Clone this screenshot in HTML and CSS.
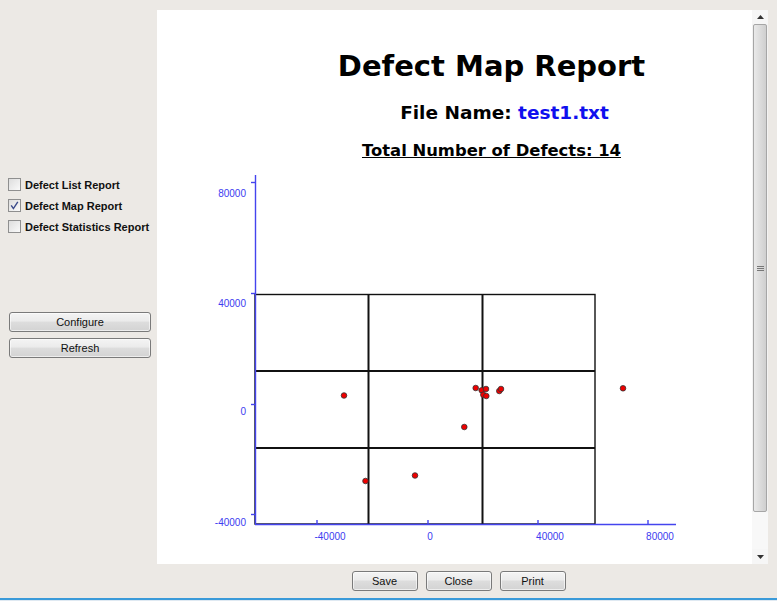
FILE: index.html
```html
<!DOCTYPE html>
<html>
<head>
<meta charset="utf-8">
<link rel="stylesheet" href="styles.css">
</head>
<body>
<div class="app">
  <aside class="side">
    <ul class="checks">
      <li class="check">
        <svg class="box" width="13" height="13" viewBox="0 0 13 13"><rect x="0.5" y="0.5" width="12" height="12" fill="url(#cbg)" stroke="#8f8f8f"/><defs><linearGradient id="cbg" x1="0" y1="0" x2="1" y2="1"><stop offset="0" stop-color="#dcdcdc"/><stop offset="1" stop-color="#fbfbfb"/></linearGradient></defs></svg>
        <span>Defect List Report</span>
      </li>
      <li class="check">
        <svg class="box" width="13" height="13" viewBox="0 0 13 13"><rect x="0.5" y="0.5" width="12" height="12" fill="url(#cbg)" stroke="#8f8f8f"/><path d="M3.2 6.4 L5.4 9.6 L9.8 2.8" fill="none" stroke="#3a4a8a" stroke-width="1.4"/></svg>
        <span>Defect Map Report</span>
      </li>
      <li class="check">
        <svg class="box" width="13" height="13" viewBox="0 0 13 13"><rect x="0.5" y="0.5" width="12" height="12" fill="url(#cbg)" stroke="#8f8f8f"/></svg>
        <span>Defect Statistics Report</span>
      </li>
    </ul>
    <div class="side-buttons">
      <button class="btn wide">Configure</button>
      <button class="btn wide">Refresh</button>
    </div>
  </aside>
  <div class="main">
    <div class="viewport">
      <div class="page">
        <div class="heading">
          <h1 class="title">Defect Map Report</h1>
          <p class="file">File Name: <span class="fname">test1.txt</span></p>
          <p class="total">Total Number of Defects: 14</p>
        </div>
        <svg class="chart" width="595" height="380" viewBox="157 170 595 380">
          <!-- grid -->
          <rect x="255" y="294.5" width="340" height="229.5" fill="none" stroke="#111" stroke-width="1.4"/>
          <line x1="368.5" y1="294" x2="368.5" y2="524" stroke="#111" stroke-width="2"/>
          <line x1="482.5" y1="294" x2="482.5" y2="524" stroke="#111" stroke-width="2"/>
          <line x1="255" y1="371" x2="595" y2="371" stroke="#111" stroke-width="2"/>
          <line x1="255" y1="448" x2="595" y2="448" stroke="#111" stroke-width="2"/>
          <!-- axes -->
          <g stroke="#4444ee" stroke-width="1.4">
            <line x1="255.5" y1="175" x2="255.5" y2="524"/>
            <line x1="255" y1="524.5" x2="676" y2="524.5"/>
            <line x1="251" y1="182.5" x2="255" y2="182.5"/>
            <line x1="251" y1="293.5" x2="255" y2="293.5"/>
            <line x1="251" y1="404.5" x2="255" y2="404.5"/>
            <line x1="251" y1="514.5" x2="255" y2="514.5"/>
            <line x1="317" y1="520" x2="317" y2="524"/>
            <line x1="428" y1="520" x2="428" y2="524"/>
            <line x1="538" y1="520" x2="538" y2="524"/>
            <line x1="648" y1="520" x2="648" y2="524"/>
          </g>
          <g class="axis-label" text-anchor="end">
            <text x="246" y="197">80000</text>
            <text x="246" y="307">40000</text>
            <text x="246" y="415">0</text>
            <text x="246" y="526">-40000</text>
          </g>
          <g class="axis-label" text-anchor="middle">
            <text x="330" y="540">-40000</text>
            <text x="430" y="540">0</text>
            <text x="550" y="540">40000</text>
            <text x="660" y="540">80000</text>
          </g>
          <!-- defects -->
          <g fill="#ee0000" stroke="#333" stroke-width="0.8">
            <circle cx="344" cy="395.5" r="2.8"/>
            <circle cx="365.5" cy="481" r="2.8"/>
            <circle cx="415" cy="475.5" r="2.8"/>
            <circle cx="464.3" cy="427" r="2.8"/>
            <circle cx="475.7" cy="388" r="2.8"/>
            <circle cx="481.7" cy="390.3" r="2.8"/>
            <circle cx="486" cy="389" r="2.8"/>
            <circle cx="483.3" cy="394.7" r="2.8"/>
            <circle cx="486.3" cy="396" r="2.8"/>
            <circle cx="499.3" cy="391" r="2.8"/>
            <circle cx="501" cy="389" r="2.8"/>
            <circle cx="623" cy="388.3" r="2.8"/>
          </g>
        </svg>
      </div>
      <div class="scrollbar">
        <div class="arrow up"><svg width="7" height="4" viewBox="0 0 7 4"><path d="M0 4 L3.5 0 L7 4 Z" fill="#333"/></svg></div>
        <div class="thumb">
          <svg width="7" height="5" viewBox="0 0 7 5"><path d="M0 0.5 H7 M0 2.5 H7 M0 4.5 H7" stroke="#777" stroke-width="1"/></svg>
        </div>
        <div class="track"></div>
        <div class="arrow down"><svg width="7" height="4" viewBox="0 0 7 4"><path d="M0 0 L3.5 4 L7 0 Z" fill="#333"/></svg></div>
      </div>
    </div>
    <div class="actions">
      <button class="btn">Save</button>
      <button class="btn">Close</button>
      <button class="btn">Print</button>
    </div>
  </div>
</div>
<div class="statusline"></div>
</body>
</html>
```
FILE: styles.css
```css
* { box-sizing: border-box; }
html, body { margin: 0; padding: 0; }
body {
  width: 777px;
  height: 601px;
  background: #ece9e5;
  font-family: "Liberation Sans", Arial, sans-serif;
  display: flex;
  flex-direction: column;
  overflow: hidden;
}
.app {
  display: grid;
  grid-template-columns: 157px 611px;
  padding-top: 10px;
}
.side {
  padding-top: 168px;
}
.checks {
  list-style: none;
  margin: 0;
  padding: 0 0 0 8px;
  display: flex;
  flex-direction: column;
  gap: 8px;
}
.check {
  display: flex;
  align-items: center;
  gap: 4px;
  height: 13px;
  font-weight: bold;
  font-size: 11px;
  color: #111;
}
.box { flex: none; }
.side-buttons {
  margin-top: 79px;
  padding-left: 9px;
  display: flex;
  flex-direction: column;
  gap: 6px;
}
.btn {
  font-family: "Liberation Sans", Arial, sans-serif;
  font-size: 11px;
  color: #111;
  height: 20px;
  width: 66px;
  padding: 0;
  border: 1px solid #7a7a7a;
  border-radius: 3px;
  background: linear-gradient(#f4f4f4 0%, #ebebeb 45%, #dddddd 50%, #d3d3d3 100%);
  box-shadow: inset 0 0 0 1px rgba(255,255,255,0.6);
}
.btn.wide { width: 142px; }
.viewport {
  display: flex;
  height: 554px;
}
.page {
  width: 595px;
  background: #fff;
  display: flex;
  flex-direction: column;
}
.heading {
  height: 160px;
  padding-left: 74px;
  text-align: center;
  font-family: "DejaVu Sans", Verdana, sans-serif;
  font-weight: bold;
  color: #000;
}
.title {
  margin: 38px 0 0;
  font-size: 29px;
  line-height: 36px;
}
.file {
  margin: 18px 0 0;
  padding-left: 26px;
  font-size: 18.5px;
  line-height: 22px;
}
.fname { color: #1010ee; }
.total {
  margin: 16px 0 0;
  font-size: 16.4px;
  line-height: 22px;
  text-decoration: underline;
}
.chart {
  display: block;
  flex: none;
}
.axis-label {
  font-family: "Liberation Sans", Arial, sans-serif;
  font-size: 10px;
  fill: #3c3cf0;
}
.scrollbar {
  width: 16px;
  display: flex;
  flex-direction: column;
  background: #f3f3f3;
}
.arrow {
  height: 14px;
  display: flex;
  align-items: center;
  justify-content: center;
  background: #f6f6f6;
}
.arrow.down { height: 15px; }
.thumb {
  height: 488px;
  margin: 0 1px;
  border: 1px solid #a6a6a6;
  border-radius: 2px;
  background: linear-gradient(90deg, #e9e9e9 0%, #dcdcdc 50%, #cfcfcf 100%);
  display: flex;
  align-items: center;
  justify-content: center;
}
.track {
  flex: 1;
  background: #f8f8f8;
}
.actions {
  display: flex;
  justify-content: center;
  gap: 8px;
  padding-right: 8px;
  margin-top: 7px;
}
.statusline {
  margin-top: auto;
  height: 3px;
  border-top: 2px solid #3a9ad9;
  background: #dfe9f2;
}
```
